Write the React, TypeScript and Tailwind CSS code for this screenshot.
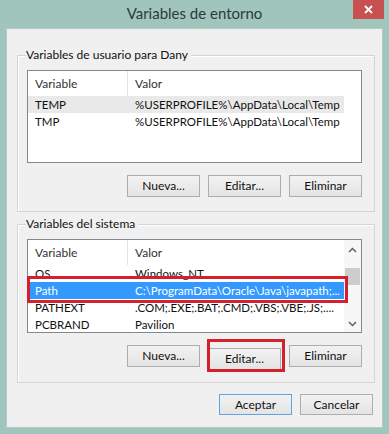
import React from 'react'

const font = "font-['Lato','Noto_Sans',sans-serif]"

const userVars = [
    { name: 'TEMP', value: '%USERPROFILE%\\AppData\\Local\\Temp', hover: true },
    { name: 'TMP', value: '%USERPROFILE%\\AppData\\Local\\Temp', hover: false },
]

const systemVars = [
    { name: 'OS', value: 'Windows_NT' },
    { name: 'Path', value: 'C:\\ProgramData\\Oracle\\Java\\javapath;...', selected: true },
    { name: 'PATHEXT', value: '.COM;.EXE;.BAT;.CMD;.VBS;.VBE;.JS;....' },
    { name: 'PCBRAND', value: 'Pavilion' },
]

const WinButton = ({ label, primary = false, tall = 'h-[22px]' }: { label: string; primary?: boolean; tall?: string }) => (
    <button
        className={`${tall} w-[73px] border ${primary ? 'border-[#62a3e2]' : 'border-[#adadad]'} bg-gradient-to-b from-[#f2f2f2] to-[#e4e4e4] text-[12px] text-[#111] leading-none`}
    >
        {label}
    </button>
)

const ListHeader = () => (
    <div className="flex h-[25px] shrink-0 items-center text-[12px] text-[#333]">
        <div className="flex h-full w-[100px] items-center border-r border-[#e5e5e5] pl-[7px]">Variable</div>
        <div className="pl-[7px]">Valor</div>
    </div>
)

const Chevron = ({ up }: { up?: boolean }) => (
    <svg width="9" height="6" viewBox="0 0 9 6">
        <polyline
            points={up ? '1,5 4.5,1.5 8,5' : '1,1 4.5,4.5 8,1'}
            fill="none"
            stroke="#606060"
            strokeWidth="1.5"
        />
    </svg>
)

const GroupBox = ({ title, children }: { title: string; children: React.ReactNode }) => (
    <div className="flex flex-col border border-[#d5d5d5] pl-[9px] pr-[12px] shadow-[inset_1px_1px_0_#ffffff]">
        <span className="-mt-[8px] -ml-[1px] h-[14px] self-start bg-[#f0f0f0] pr-[3px] text-[12px] leading-[14px] text-[#111]">
            {title}
        </span>
        {children}
    </div>
)

const App = () => {
    return (
        <div className={`flex h-[434px] w-[389px] flex-col bg-[#9fc5bd] ${font}`}>
            {/* title bar */}
            <div className="grid h-[28px] grid-cols-[1fr_auto_1fr]">
                <div />
                <div className="pt-[3px] text-[15px] leading-[20px] text-[#2f3a38]">Variables de entorno</div>
                <div className="flex justify-end pr-[5px]">
                    <div className="flex h-[19px] w-[31px] items-center justify-center bg-[#c75050]">
                        <svg width="9" height="9" viewBox="0 0 9 9">
                            <path d="M1 1 L8 8 M8 1 L1 8" stroke="#fff" strokeWidth="1.8" />
                        </svg>
                    </div>
                </div>
            </div>

            {/* dialog body */}
            <div className="mx-[6px] mb-[6px] flex flex-1 flex-col border border-[#b4cbc5] bg-[#f0f0f0] pt-[26px] pb-[12px] pl-[10px] pr-[7px]">
                <div className="h-[157px]">
                    <GroupBox title="Variables de usuario para Dany">
                        <div className="mt-[8px] flex h-[93px] flex-col border border-[#828790] bg-white">
                            <ListHeader />
                            {userVars.map((v, i) => (
                                <div
                                    key={i}
                                    className={`flex h-[17px] w-[316px] items-center text-[11.5px] text-[#111] ${v.hover ? 'bg-[#e9e9e9]' : ''}`}
                                >
                                    <div className="w-[100px] pl-[7px]">{v.name}</div>
                                    <div className="whitespace-nowrap pl-[7px]">{v.value}</div>
                                </div>
                            ))}
                        </div>
                        <div className="mt-[12px] mb-[14px] flex justify-end gap-[8px]">
                            <WinButton label="Nueva..." />
                            <WinButton label="Editar..." />
                            <WinButton label="Eliminar" />
                        </div>
                    </GroupBox>
                </div>

                <div className="mt-[12px] h-[156px]">
                    <GroupBox title="Variables del sistema">
                        <div className="mt-[8px] flex h-[94px] border border-[#828790] bg-white">
                            <div className="flex flex-1 flex-col">
                                <ListHeader />
                                {systemVars.map((v, i) => (
                                    <div
                                        key={i}
                                        className={`relative flex h-[17px] w-[316px] shrink-0 items-center text-[11.5px] ${v.selected ? 'bg-[#3399ff] text-white' : 'text-[#111]'}`}
                                    >
                                        <div className="w-[100px] pl-[7px]">{v.name}</div>
                                        <div className="whitespace-nowrap pl-[7px]">{v.value}</div>
                                        {v.selected && (
                                            <span className="absolute -top-[6px] -bottom-[4px] -left-[1px] -right-[4px] z-10 border-[3px] border-[#d4202c]" />
                                        )}
                                    </div>
                                ))}
                            </div>
                            {/* scrollbar */}
                            <div className="flex w-[17px] flex-col items-center bg-[#f7f7f7]">
                                <div className="flex h-[19px] w-full items-center justify-center">
                                    <Chevron up />
                                </div>
                                <div className="flex-1 w-full px-[1px] pt-[9px]">
                                    <div className="h-[17px] w-full bg-[#cdcdcd]" />
                                </div>
                                <div className="flex h-[17px] w-full items-center justify-center">
                                    <Chevron />
                                </div>
                            </div>
                        </div>
                        <div className="mt-[12px] mb-[12px] flex justify-end gap-[8px]">
                            <WinButton label="Nueva..." />
                            <div className="relative">
                                <WinButton label="Editar..." />
                                <span className="absolute -top-[6px] -bottom-[2px] -left-[1px] -right-[4px] border-[3px] border-[#d4202c]" />
                            </div>
                            <WinButton label="Eliminar" />
                        </div>
                    </GroupBox>
                </div>

                <div className="mt-[14px] mr-[2px] flex justify-end gap-[8px]">
                    <WinButton label="Aceptar" primary tall="h-[21px]" />
                    <WinButton label="Cancelar" tall="h-[21px]" />
                </div>
            </div>
        </div>
    )
}

export default App
